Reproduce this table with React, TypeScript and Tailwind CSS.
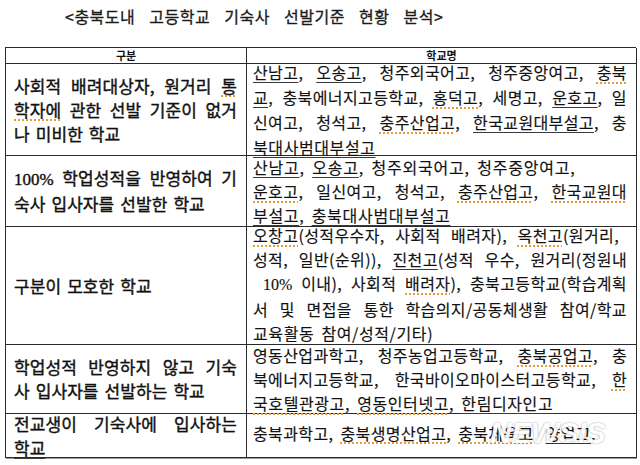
import React from "react";
import clsx from "clsx";

type Kids = { children: React.ReactNode };

// spell-check style marks seen under school names
const D = ({ children }: Kids) => (
  <span className="underline decoration-[#3a3a3a] underline-offset-[3px]">{children}</span>
);
const O = ({ children }: Kids) => (
  <span className="underline decoration-dotted decoration-2 decoration-[#e99a3c] underline-offset-[3px]">
    {children}
  </span>
);
const Num = ({ children }: Kids) => (
  <span className="font-['Liberation_Serif',serif] tracking-normal">{children}</span>
);

const Line = ({
  full,
  className,
  children,
}: {
  full?: boolean;
  className?: string;
  children: React.ReactNode;
}) => (
  <div className={clsx(full && "text-justify [text-align-last:justify]", className)}>{children}</div>
);

const LeftCell = ({ children, className }: { children: React.ReactNode; className?: string }) => (
  <div
    className={clsx(
      "flex flex-col justify-center border-r border-b border-[#2a2a2a] pl-[8px] pr-[9px] text-[17px] leading-[24px] tracking-[0.1px] [word-spacing:2px] [-webkit-text-stroke:0.4px_#111]",
      className
    )}
  >
    {children}
  </div>
);

const RightCell = ({ children, className }: { children: React.ReactNode; className?: string }) => (
  <div
    className={clsx(
      "border-r border-b border-[#2a2a2a] pl-[6px] pr-[9px] text-[16px] leading-[24px] tracking-[0.4px] [word-spacing:3px] [-webkit-text-stroke:0.15px_#111]",
      className
    )}
  >
    {children}
  </div>
);

export default function App() {
  return (
    <div className="relative h-[465px] w-[640px] overflow-hidden bg-white font-['Noto_Sans_CJK_KR',sans-serif] text-[#111]">
      {/* title */}
      <div className="h-[47px] pl-[65px] pt-[4px] text-[16px] leading-[24px] tracking-[0.5px] text-[#1a1a1a] [word-spacing:10px] [-webkit-text-stroke:0.3px_#1a1a1a]">
        {"<충북도내 고등학교 기숙사 선발기준 현황 분석>"}
      </div>

      <div className="ml-[5px] grid w-[631px] grid-cols-[241px_390px] grid-rows-[16px_92px_71px_118px_69px_44px] border-l border-t border-[#2a2a2a] shadow-[1px_1px_0_#9a9a9a]">
        {/* header */}
        <div className="flex items-center justify-center border-r border-b border-[#2a2a2a] text-[11px] font-bold leading-none">
          구분
        </div>
        <div className="flex items-center justify-center border-r border-b border-[#2a2a2a] text-[11px] font-bold leading-none">
          학교명
        </div>

        {/* row 1 */}
        <LeftCell>
          <Line full>
            사회적 배려대상자, 원거리 <O>통</O>
          </Line>
          <Line full>
            <O>학자에</O> 관한 선발 기준이 없거
          </Line>
          <Line>나 미비한 학교</Line>
        </LeftCell>
        <RightCell className="leading-[25px]">
          <div className="-mt-[4px]">
            <Line full>
              <D>산남고</D>, <D>오송고</D>, 청주외국어고, 청주중앙여고, <O>충북</O>
            </Line>
            <Line full>
              <D>교</D>, 충북에너지고등학교, <O>홍덕고</O>, 세명고, <D>운호고</D>, 일
            </Line>
            <Line full>
              신여고, 청석고, <O>충주산업고</O>, <D>한국교원대부설고</D>, 충
            </Line>
            <Line className="tracking-[0.6px]">
              <D>북대사범대부설고</D>
            </Line>
          </div>
        </RightCell>

        {/* row 2 */}
        <LeftCell>
          <Line full>
            <Num>100%</Num> 학업성적을 반영하여 기
          </Line>
          <Line>숙사 입사자를 선발한 학교</Line>
        </LeftCell>
        <RightCell>
          <div className="-mt-[1px]">
            <Line className="tracking-[0.8px]">
              <D>산남고</D>, <D>오송고</D>, 청주외국어고, 청주중앙여고,
            </Line>
            <Line full>
              <O>운호고</O>, 일신여고, 청석고, <O>충주산업고</O>, <O>한국교원대</O>
            </Line>
            <Line className="tracking-[0.7px]">
              <D>부설고</D>, <D>충북대사범대부설고</D>
            </Line>
          </div>
        </RightCell>

        {/* row 3 */}
        <LeftCell>
          <Line>구분이 모호한 학교</Line>
        </LeftCell>
        <RightCell className="leading-[24.5px]">
          <div className="-mt-[4px]">
            <Line full className="pr-[8px]">
              <O>오창고</O>(성적우수자, 사회적 배려자), <O>옥천고</O>(원거리,
            </Line>
            <Line full>
              성적, 일반(순위)), <D>진천고</D>(성적 우수, 원거리(정원내
            </Line>
            <Line full className="pl-[10px]">
              <Num>10%</Num> 이내), 사회적 <O>배려자</O>), 충북고등학교(학습계획
            </Line>
            <Line full>서 및 면접을 통한 학습의지/공동체생활 참여/학교</Line>
            <Line className="tracking-[0.6px]">교육활동 참여/성적/기타)</Line>
          </div>
        </RightCell>

        {/* row 4 */}
        <LeftCell>
          <Line full>학업성적 반영하지 않고 기숙</Line>
          <Line>사 입사자를 선발하는 학교</Line>
        </LeftCell>
        <RightCell>
          <div className="-mt-[2px]">
            <Line full>
              영동산업과학고, 청주농업고등학교, <O>충북공업고</O>, 충
            </Line>
            <Line full>
              북에너지고등학교, 한국바이오마이스터고등학교, <O>한</O>
            </Line>
            <Line className="tracking-[0.6px]">
              <O>국호텔관광고</O>, <O>영동인터넷고</O>, <D>한림디자인고</D>
            </Line>
          </div>
        </RightCell>

        {/* row 5 */}
        <LeftCell>
          <Line full>전교생이 기숙사에 입사하는</Line>
          <Line>
            <D>학교</D>
          </Line>
        </LeftCell>
        <RightCell className="flex items-center pb-[6px] tracking-[0.2px] [word-spacing:3px]">
          <Line>
            충북과학고, <O>충북생명산업고</O>, <O>충북체육고</O>, <D>양업고</D>,
          </Line>
        </RightCell>
      </div>

      {/* watermark */}
      <div className="pointer-events-none absolute left-[490px] top-[418px] font-['Liberation_Sans',sans-serif] text-[30px] font-black italic leading-none tracking-[-0.5px] text-white opacity-90 [text-shadow:0_0_2px_rgba(0,0,0,0.45)]">
        NEWSIS
      </div>
    </div>
  );
}
